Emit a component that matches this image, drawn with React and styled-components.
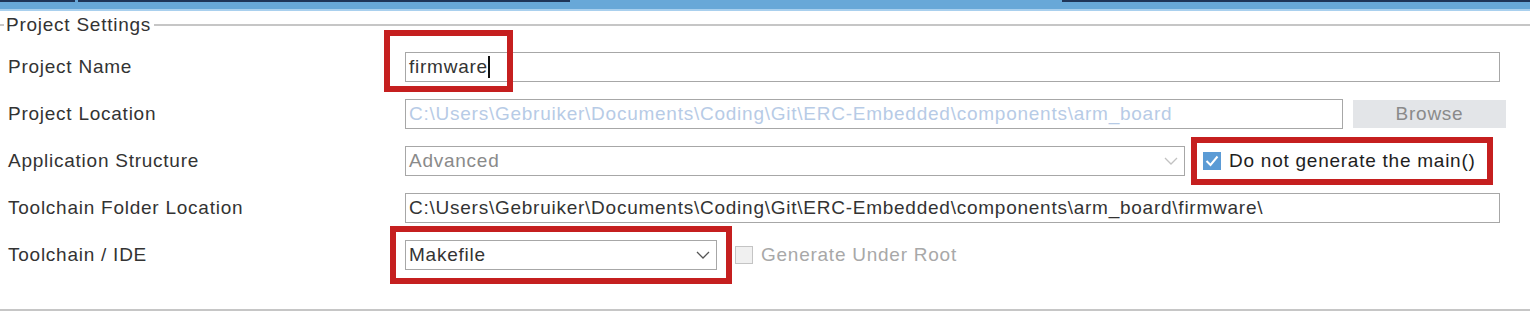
import styled, { createGlobalStyle } from "styled-components";

const GlobalStyle = createGlobalStyle`
  body {
    margin: 0;
    background: #ffffff;
    font-family: "Liberation Sans", Arial, sans-serif;
    letter-spacing: 0.75px;
  }
`;

const tabs = [
  { w: 75, dark: true },
  { w: 3, dark: false },
  { w: 492, dark: true },
  { w: 492, dark: false },
  { w: 468, dark: true },
];

function Chevron({ disabled }) {
  return (
    <svg width="14" height="8" viewBox="0 0 14 8">
      <path
        d="M1 1 L7 7 L13 1"
        fill="none"
        stroke={disabled ? "#c2c2c2" : "#555555"}
        strokeWidth="1.3"
      />
    </svg>
  );
}

function App() {
  return (
    <Page>
      <GlobalStyle />
      <TopBar>
        <TabStrip>
          {tabs.map((t, i) => (
            <TabEdge key={i} $w={t.w} $dark={t.dark} />
          ))}
        </TabStrip>
      </TopBar>

      <Group>
        <Header>
          <Stub />
          <Title>Project Settings</Title>
          <Rule />
        </Header>

        <Row>
          <Label>Project Name</Label>
          <Field $w={1095}>
            firmware
            <Caret />
          </Field>
        </Row>

        <Row>
          <Label>Project Location</Label>
          <Field $w={938} $disabled>
            C:\Users\Gebruiker\Documents\Coding\Git\ERC-Embedded\components\arm_board
          </Field>
          <BrowseButton>Browse</BrowseButton>
        </Row>

        <Row>
          <Label>Application Structure</Label>
          <Select $w={780} $disabled>
            <span>Advanced</span>
            <Chevron disabled />
          </Select>
          <Check $on>
            <CheckBox $on>
              <svg width="14" height="12" viewBox="0 0 14 12">
                <path d="M1.5 6 L5.5 10 L12.5 1.5" fill="none" stroke="#ffffff" strokeWidth="2" />
              </svg>
            </CheckBox>
            Do not generate the main()
          </Check>
        </Row>

        <Row>
          <Label>Toolchain Folder Location</Label>
          <Field $w={1095}>
            C:\Users\Gebruiker\Documents\Coding\Git\ERC-Embedded\components\arm_board\firmware\
          </Field>
        </Row>

        <Row>
          <Label>Toolchain / IDE</Label>
          <Select $w={312}>
            <span>Makefile</span>
            <Chevron />
          </Select>
          <Check>
            <CheckBox />
            Generate Under Root
          </Check>
        </Row>
      </Group>

      <Highlight style={{ left: 384, top: 30, width: 129, height: 62 }} />
      <Highlight style={{ left: 1191, top: 137, width: 302, height: 48 }} />
      <Highlight style={{ left: 390, top: 226, width: 342, height: 58 }} />
    </Page>
  );
}

const Page = styled.div`
  position: relative;
  width: 1530px;
  height: 313px;
  overflow: hidden;
  background: #ffffff;
`;

const TopBar = styled.div`
  height: 9px;
  background: #68a8d8;
  border-bottom: 2px solid #a9d0ee;
`;

const TabStrip = styled.div`
  display: flex;
  height: 2px;
`;

const TabEdge = styled.div`
  width: ${(p) => p.$w}px;
  flex-shrink: 0;
  background: ${(p) => (p.$dark ? "#1f3558" : "transparent")};
`;

const Group = styled.div`
  height: 300px;
  box-sizing: border-box;
  border-bottom: 2px solid #c6c6c6;
  padding-bottom: 32px;
`;

const Header = styled.div`
  display: flex;
  align-items: center;
  height: 28px;
  margin-bottom: 4px;
`;

const Stub = styled.div`
  width: 4px;
  height: 2px;
  background: #c6c6c6;
`;

const Title = styled.span`
  font-size: 19px;
  color: #333333;
  padding: 0 3px 0 2px;
`;

const Rule = styled.div`
  flex: 1;
  height: 2px;
  background: #c6c6c6;
`;

const Row = styled.div`
  display: flex;
  align-items: center;
  height: 47px;
  padding-left: 8px;
`;

const Label = styled.div`
  width: 397px;
  flex-shrink: 0;
  font-size: 19px;
  color: #333333;
`;

const Field = styled.div`
  display: flex;
  align-items: center;
  width: ${(p) => p.$w}px;
  height: 30px;
  box-sizing: border-box;
  border: 1.5px solid #a7a7a7;
  padding-left: 3px;
  font-size: 19px;
  color: ${(p) => (p.$disabled ? "#b7cbe6" : "#333333")};
  white-space: nowrap;
  overflow: hidden;
`;

const Caret = styled.span`
  display: inline-block;
  width: 2px;
  height: 22px;
  margin-left: 0;
  background: #111111;
`;

const Select = styled(Field)`
  justify-content: space-between;
  padding-right: 6px;
  color: ${(p) => (p.$disabled ? "#8a8a8a" : "#333333")};
`;

const BrowseButton = styled.div`
  display: flex;
  align-items: center;
  justify-content: center;
  width: 153px;
  height: 28px;
  margin-left: 10px;
  background: #e3e5e8;
  color: #8a8a8a;
  font-size: 19px;
`;

const Check = styled.div`
  display: flex;
  align-items: center;
  gap: 8px;
  margin-left: 18px;
  font-size: 19px;
  color: ${(p) => (p.$on ? "#1e1e1e" : "#a8a8a8")};
`;

const CheckBox = styled.div`
  display: flex;
  align-items: center;
  justify-content: center;
  width: 18px;
  height: 18px;
  box-sizing: border-box;
  background: ${(p) => (p.$on ? "#5b9bd5" : "#f0f0f0")};
  border: 1px solid ${(p) => (p.$on ? "#5b9bd5" : "#c4c4c4")};
`;

const Highlight = styled.div`
  position: absolute;
  box-sizing: border-box;
  border: 6px solid #c51f1f;
  pointer-events: none;
`;

export default App;
